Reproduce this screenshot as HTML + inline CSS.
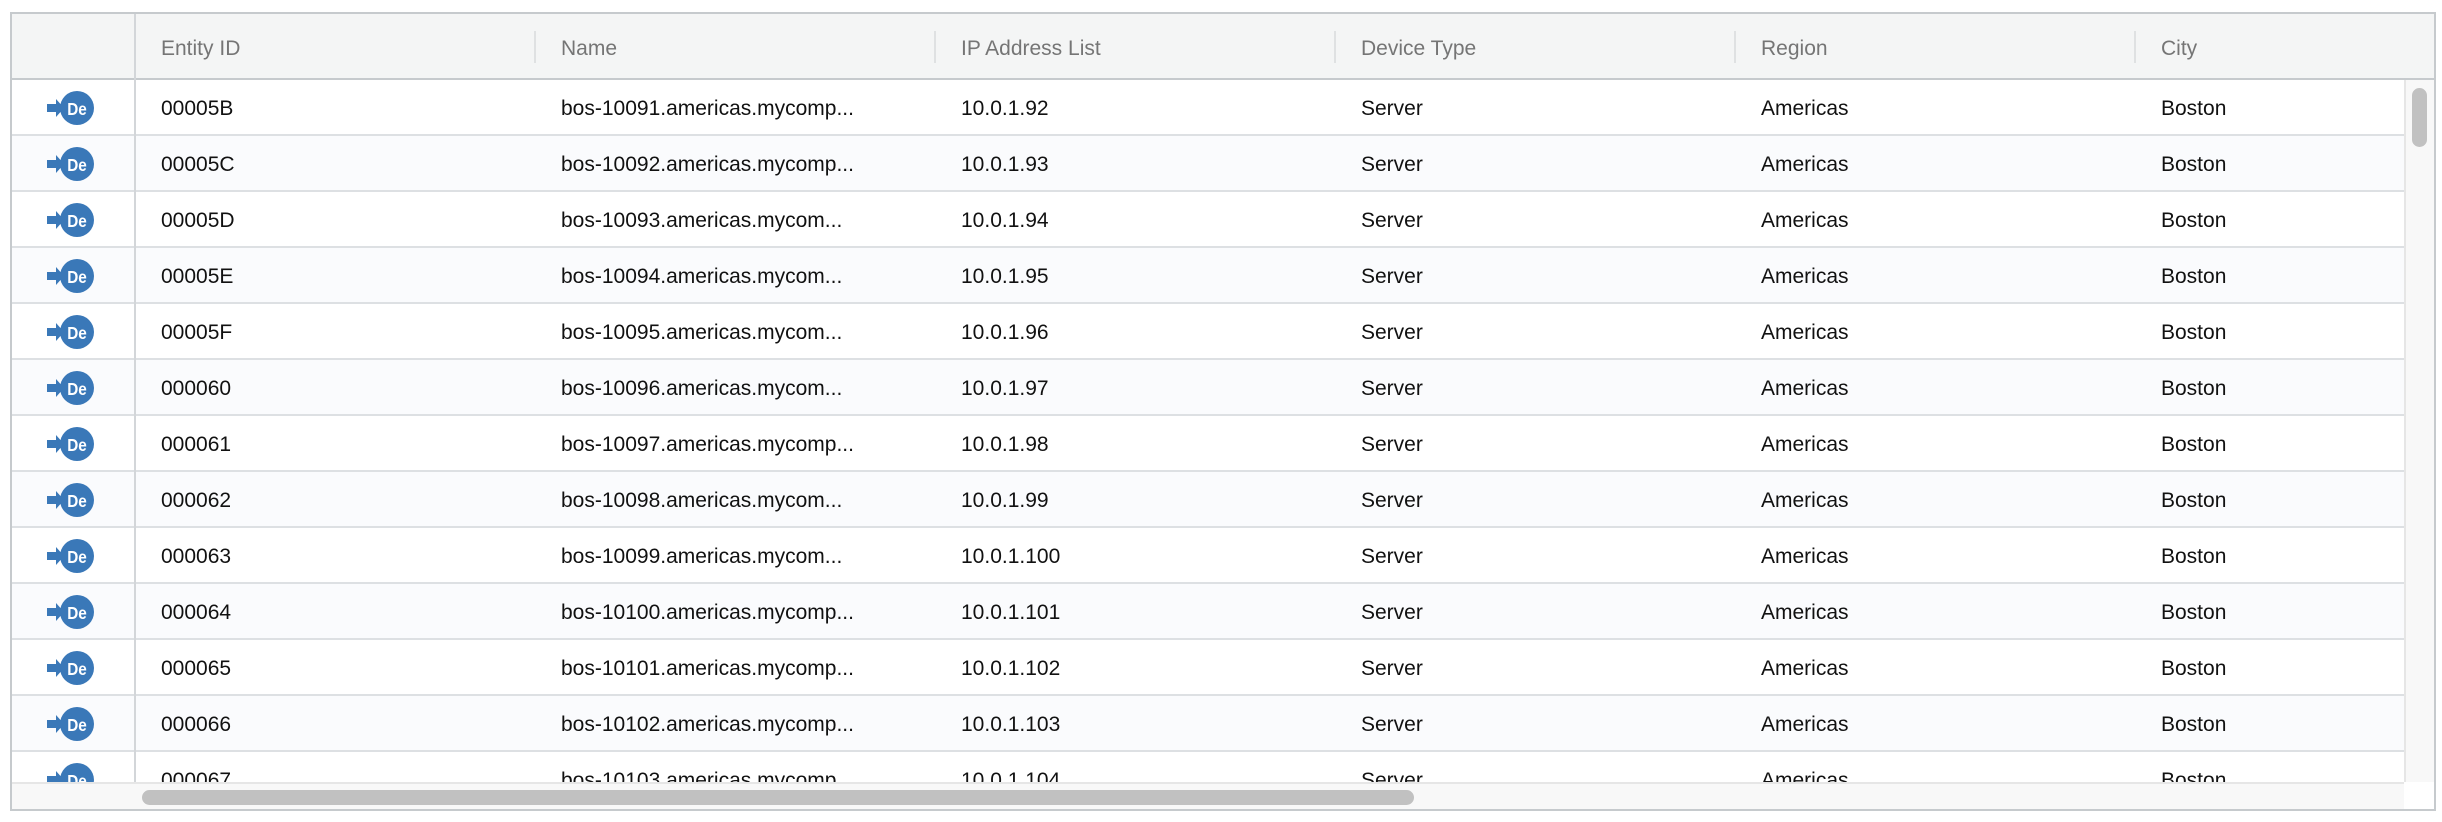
<!DOCTYPE html>
<html><head><style>
*{margin:0;padding:0;box-sizing:border-box}
body{width:2442px;height:822px;background:#fff;position:relative;overflow:hidden;font-family:"Liberation Sans",Arial,sans-serif}
.grid{position:absolute;left:10px;top:12px;width:2426px;height:799px;border:2px solid #c6cacd;overflow:hidden;background:#fff}
.hdr{position:absolute;left:0;top:0;width:2424px;height:66px;background:#f4f5f5;border-bottom:2px solid #c6cacd}
.ht1{position:absolute;top:3px;height:64px;line-height:64px;font-size:21px;color:#757575}
.sep{position:absolute;top:17px;width:2px;height:32px;background:#dfe1e2}
.row{position:absolute;left:0;width:2392px;height:56px;border-bottom:2px solid #dde0e3;background:#fff}
.alt{background:#fafbfd}
.c{position:absolute;top:2px;line-height:54px;font-size:21px;color:#111;white-space:nowrap}
.c1{left:149px}.c2{left:549px}.c3{left:949px}.c4{left:1349px}.c5{left:1749px}.c6{left:2149px}
.ic{position:absolute;left:34px;top:10px}
.vline{position:absolute;left:122px;top:0;width:2px;height:797px;background:#d3d6d9}
.vs{position:absolute;left:2392px;top:66px;width:30px;height:702px;background:#f8f8f8;border-left:2px solid #e6e6e6}
.vt{position:absolute;left:2400px;top:74px;width:15px;height:59px;background:#c1c1c1;border-radius:8px}
.hs{position:absolute;left:0;top:768px;width:2392px;height:29px;background:#f8f8f8;border-top:2px solid #e6e6e6}
.hth{position:absolute;left:130px;top:776px;width:1272px;height:15px;background:#c1c1c1;border-radius:8px}
</style></head><body>
<svg width="0" height="0" style="position:absolute"><defs><g id="ico"><path d="M1 14h9v-5l8 9-8 9v-5H1z" fill="#3a78b8"/><circle cx="31" cy="18" r="17" fill="#3a78b8"/><text x="31" y="25" text-anchor="middle" font-family="Liberation Sans,Arial,sans-serif" font-weight="bold" font-size="18" fill="#fff" transform="translate(31 0) scale(0.85 1) translate(-31 0)">De</text></g></defs></svg>
<div class="grid">
<div class="row" style="top:66px"><svg class="ic" width="48" height="36"><use href="#ico"/></svg><span class="c c1">00005B</span><span class="c c2">bos-10091.americas.mycomp...</span><span class="c c3">10.0.1.92</span><span class="c c4">Server</span><span class="c c5">Americas</span><span class="c c6">Boston</span></div>
<div class="row alt" style="top:122px"><svg class="ic" width="48" height="36"><use href="#ico"/></svg><span class="c c1">00005C</span><span class="c c2">bos-10092.americas.mycomp...</span><span class="c c3">10.0.1.93</span><span class="c c4">Server</span><span class="c c5">Americas</span><span class="c c6">Boston</span></div>
<div class="row" style="top:178px"><svg class="ic" width="48" height="36"><use href="#ico"/></svg><span class="c c1">00005D</span><span class="c c2">bos-10093.americas.mycom...</span><span class="c c3">10.0.1.94</span><span class="c c4">Server</span><span class="c c5">Americas</span><span class="c c6">Boston</span></div>
<div class="row alt" style="top:234px"><svg class="ic" width="48" height="36"><use href="#ico"/></svg><span class="c c1">00005E</span><span class="c c2">bos-10094.americas.mycom...</span><span class="c c3">10.0.1.95</span><span class="c c4">Server</span><span class="c c5">Americas</span><span class="c c6">Boston</span></div>
<div class="row" style="top:290px"><svg class="ic" width="48" height="36"><use href="#ico"/></svg><span class="c c1">00005F</span><span class="c c2">bos-10095.americas.mycom...</span><span class="c c3">10.0.1.96</span><span class="c c4">Server</span><span class="c c5">Americas</span><span class="c c6">Boston</span></div>
<div class="row alt" style="top:346px"><svg class="ic" width="48" height="36"><use href="#ico"/></svg><span class="c c1">000060</span><span class="c c2">bos-10096.americas.mycom...</span><span class="c c3">10.0.1.97</span><span class="c c4">Server</span><span class="c c5">Americas</span><span class="c c6">Boston</span></div>
<div class="row" style="top:402px"><svg class="ic" width="48" height="36"><use href="#ico"/></svg><span class="c c1">000061</span><span class="c c2">bos-10097.americas.mycomp...</span><span class="c c3">10.0.1.98</span><span class="c c4">Server</span><span class="c c5">Americas</span><span class="c c6">Boston</span></div>
<div class="row alt" style="top:458px"><svg class="ic" width="48" height="36"><use href="#ico"/></svg><span class="c c1">000062</span><span class="c c2">bos-10098.americas.mycom...</span><span class="c c3">10.0.1.99</span><span class="c c4">Server</span><span class="c c5">Americas</span><span class="c c6">Boston</span></div>
<div class="row" style="top:514px"><svg class="ic" width="48" height="36"><use href="#ico"/></svg><span class="c c1">000063</span><span class="c c2">bos-10099.americas.mycom...</span><span class="c c3">10.0.1.100</span><span class="c c4">Server</span><span class="c c5">Americas</span><span class="c c6">Boston</span></div>
<div class="row alt" style="top:570px"><svg class="ic" width="48" height="36"><use href="#ico"/></svg><span class="c c1">000064</span><span class="c c2">bos-10100.americas.mycomp...</span><span class="c c3">10.0.1.101</span><span class="c c4">Server</span><span class="c c5">Americas</span><span class="c c6">Boston</span></div>
<div class="row" style="top:626px"><svg class="ic" width="48" height="36"><use href="#ico"/></svg><span class="c c1">000065</span><span class="c c2">bos-10101.americas.mycomp...</span><span class="c c3">10.0.1.102</span><span class="c c4">Server</span><span class="c c5">Americas</span><span class="c c6">Boston</span></div>
<div class="row alt" style="top:682px"><svg class="ic" width="48" height="36"><use href="#ico"/></svg><span class="c c1">000066</span><span class="c c2">bos-10102.americas.mycomp...</span><span class="c c3">10.0.1.103</span><span class="c c4">Server</span><span class="c c5">Americas</span><span class="c c6">Boston</span></div>
<div class="row" style="top:738px"><svg class="ic" width="48" height="36"><use href="#ico"/></svg><span class="c c1">000067</span><span class="c c2">bos-10103.americas.mycomp...</span><span class="c c3">10.0.1.104</span><span class="c c4">Server</span><span class="c c5">Americas</span><span class="c c6">Boston</span></div>
<div class="hdr">
<span class="ht1" style="left:149px">Entity ID</span>
<span class="ht1" style="left:549px">Name</span>
<span class="ht1" style="left:949px">IP Address List</span>
<span class="ht1" style="left:1349px">Device Type</span>
<span class="ht1" style="left:1749px">Region</span>
<span class="ht1" style="left:2149px">City</span>
<span class="sep" style="left:522px"></span><span class="sep" style="left:922px"></span><span class="sep" style="left:1322px"></span><span class="sep" style="left:1722px"></span><span class="sep" style="left:2122px"></span>
</div>
<div class="vline"></div>
<div class="vs"></div><div class="vt"></div>
<div class="hs"></div><div class="hth"></div>
</div>
</body></html>
